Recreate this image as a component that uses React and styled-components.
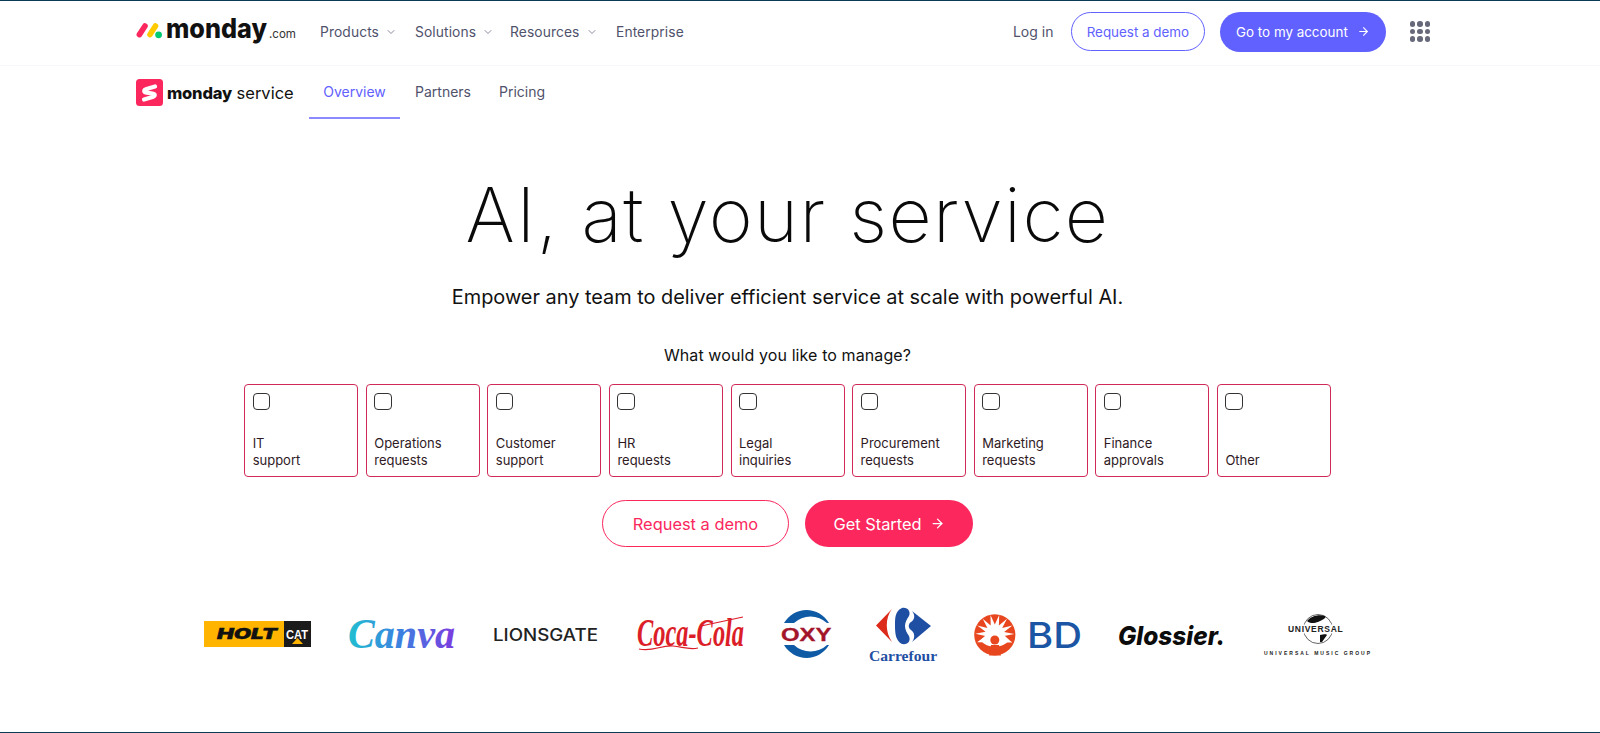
import React from 'react';
import styled, { createGlobalStyle } from 'styled-components';
import { ChevronDown, ArrowRight } from 'lucide-react';

const Global = createGlobalStyle`
  html, body { margin: 0; padding: 0; background: #fff; }
  body { font-family: Inter, "Open Sans", sans-serif; height: 733px; overflow: hidden; }
`;

const Page = styled.div`
  width: 1600px; height: 733px; box-sizing: border-box;
  border-top: 1px solid #0b3a55;
  border-bottom: 1px solid #0b3a55;
  overflow: hidden;
`;
const TopNav = styled.header`
  height: 64px; box-sizing: content-box; display: flex; align-items: center; padding: 0 0 0 136px;
  border-bottom: 1px solid #f5f5fc;
`;
const TopInner = styled.div`
  display: flex; align-items: center; flex: 1; margin-bottom: 3px;
`;
const Menu = styled.nav`
  display: flex; align-items: center; margin-left: 24px;
`;
const MenuItem = styled.a`
  display: flex; align-items: center; width: ${p => p.$w}px;
  font-size: 13.8px; color: #50526b; letter-spacing: .1px;
  svg { margin-left: 6px; color: #8a8c9e; }
`;
const RightNav = styled.div`
  display: flex; align-items: center; margin-left: auto; margin-right: 170px;
`;
const Login = styled.a`
  font-size: 14px; color: #50526b; margin-right: 20px; width: 38px; white-space: nowrap;
`;
const NavOutline = styled.a`
  width: 134px; height: 39px; box-sizing: border-box; border: 1px solid #6161ff; border-radius: 20px;
  display: flex; align-items: center; justify-content: center;
  color: #6161ff; font-size: 13.4px; margin-right: 15px;
`;
const NavFilled = styled.a`
  width: 166px; height: 40px; border-radius: 20px; background: #6161ff; color: #fff;
  display: flex; align-items: center; justify-content: center; gap: 9px; font-size: 13.4px;
`;
const Dots = styled.span`
  display: grid; grid-template-columns: repeat(3, 5.5px); gap: 1.8px; margin-left: 24px;
  i { width: 5.5px; height: 5.5px; border-radius: 50%; background: #676879; display: block; }
`;
const SubNav = styled.div`
  height: 53px; display: flex; align-items: stretch; padding-left: 136px;
`;
const ServiceLogo = styled.div`
  display: flex; align-items: center; gap: 4px; width: 173px;
`;
const ServiceText = styled.span`
  font-size: 16.5px; color: #111; white-space: nowrap;
  b { font-weight: 800; letter-spacing: -.2px; }
`;
const Tab = styled.a`
  box-sizing: border-box; width: ${p => p.$w}px; display: flex; align-items: center; justify-content: center;
  font-size: 14px; color: ${p => p.$active ? '#6161ff' : '#50526b'};
  border-bottom: 2px solid ${p => p.$active ? '#8b8bff' : 'transparent'};
`;
const Hero = styled.main`
  width: 1575px; display: flex; flex-direction: column; align-items: center;
`;
const Title = styled.h1`
  margin: 49px 0 0; font-size: 75px; line-height: 94px; font-weight: 250; color: #0a0a0a;
  letter-spacing: 1.45px; white-space: nowrap;
`;
const Subtitle = styled.p`
  margin: 20px 0 0; font-size: 19.9px; line-height: 30px; color: #111; font-weight: 400;
`;
const Question = styled.p`
  margin: 31px 0 0; font-size: 16px; line-height: 24px; color: #111; letter-spacing: .1px;
`;
const Cards = styled.div`
  display: flex; gap: 7.6px; margin-top: 17px;
`;
const Card = styled.label`
  box-sizing: border-box; width: 114px; height: 93px; border: 1px solid #cf2a58; border-radius: 4px;
  padding: 7.5px 7.5px 8px; display: flex; flex-direction: column; justify-content: space-between;
`;
const Check = styled.span`
  box-sizing: border-box; width: 17.5px; height: 17.5px; border: 1px solid #333; border-radius: 4px; display: block;
`;
const CardText = styled.span`
  font-size: 13px; line-height: 16.5px; color: #2f1a1f; white-space: pre-line;
`;
const Actions = styled.div`
  display: flex; gap: 16px; margin-top: 23px;
`;
const PinkOutline = styled.a`
  box-sizing: border-box; width: 187px; height: 47px; border: 1px solid #fb275d; border-radius: 24px;
  display: flex; align-items: center; justify-content: center; color: #fb275d; font-size: 16.4px;
`;
const PinkFilled = styled.a`
  width: 168px; height: 47px; border-radius: 24px; background: #fb275d; color: #fff;
  display: flex; align-items: center; justify-content: center; gap: 8px; font-size: 16.4px;
`;
const LogoRow = styled.div`
  display: flex; align-items: flex-start; margin-top: 61px; width: 1168px; height: 56px;
  justify-content: space-between;
`;
const LogoSvg = styled.svg`
  display: block; flex: none; overflow: visible; margin-top: ${p => p.$top || 0}px;
`;

const MondayLogo = () => (
  <LogoSvg width="160" height="32" viewBox="0 0 160 32">
    <line x1="3.4" y1="18.6" x2="9" y2="10" stroke="#fb275d" strokeWidth="5.6" strokeLinecap="round" />
    <line x1="14" y1="18.6" x2="19.5" y2="10" stroke="#ffcb00" strokeWidth="5.6" strokeLinecap="round" />
    <circle cx="22.6" cy="18.8" r="3.4" fill="#00ca72" />
    <text x="30" y="21.5" fontFamily="Inter" fontWeight="800" fontSize="26.5" textLength="101" lengthAdjust="spacingAndGlyphs" fill="#111">monday</text>
    <text x="133" y="21.5" fontFamily="Inter" fontWeight="400" fontSize="12.5" textLength="27" lengthAdjust="spacingAndGlyphs" fill="#333">.com</text>
  </LogoSvg>
);
const ServiceIcon = () => (
  <LogoSvg width="27" height="27" viewBox="0 0 27 27">
    <rect width="27" height="27" rx="3.5" fill="#fb275d" />
    <path d="M19 7.5 10.5 10C7.5 11 7.5 13 10.5 13.6L16.5 14.5C19.5 15 19.5 17 16.5 18L8 20.5" fill="none" stroke="#fff" strokeWidth="4.2" strokeLinecap="round" strokeLinejoin="round" />
  </LogoSvg>
);
const Holt = () => (
  <LogoSvg width="107" height="27" viewBox="0 0 107 27" $top={13}>
    <rect width="80" height="26" fill="#ffb500" />
    <rect x="80" width="27" height="26" fill="#1b1b1b" />
    <text x="13" y="18" fontFamily="Inter" fontWeight="900" fontStyle="italic" fontSize="14.5" textLength="60" lengthAdjust="spacingAndGlyphs" fill="#111" stroke="#111" strokeWidth=".4">HOLT</text>
    <path d="M88 23 93.5 17 99 23z" fill="#ffb500" />
    <text x="82" y="18" fontFamily="Liberation Sans" fontWeight="700" fontSize="13" textLength="22" lengthAdjust="spacingAndGlyphs" fill="#fff">CAT</text>
  </LogoSvg>
);
const Canva = () => (
  <LogoSvg width="108" height="36" viewBox="0 0 108 36" $top={9}>
    <defs>
      <linearGradient id="canvaGrad" gradientUnits="userSpaceOnUse" x1="0" x2="107" y1="0" y2="0">
        <stop offset="0" stopColor="#20bfd0" />
        <stop offset=".5" stopColor="#3d7fe0" />
        <stop offset="1" stopColor="#7d3be0" />
      </linearGradient>
    </defs>
    <text x="0" y="31" fontFamily="Liberation Serif" fontStyle="italic" fontWeight="700" fontSize="43" textLength="107" lengthAdjust="spacingAndGlyphs" fill="url(#canvaGrad)">Canva</text>
  </LogoSvg>
);
const Lionsgate = () => (
  <LogoSvg width="106" height="16" viewBox="0 0 106 16" $top={19}>
    <text x="0" y="14" fontFamily="Inter" fontWeight="500" fontSize="17" textLength="105" lengthAdjust="spacingAndGlyphs" fill="#222">LIONSGATE</text>
  </LogoSvg>
);
const Coke = () => (
  <LogoSvg width="107" height="36" viewBox="0 0 107 36" $top={9}>
    <text transform="translate(0 29) scale(.61 1)" fontFamily="Liberation Serif" fontStyle="italic" fontWeight="700" fontSize="40" fill="#dc1e28">Coca-Cola</text>
    <path d="M2 32c14 3 22-4 34-3 10 1 16 4 25 2M64 9c14-3 28-6 42-9" fill="none" stroke="#dc1e28" strokeWidth="1.2" />
  </LogoSvg>
);
const Oxy = () => (
  <LogoSvg width="51" height="52" viewBox="0 0 51 52">
    <path d="M3 15A26 26 0 0 1 48 15L46 15A24 24 0 0 0 13 15Z" fill="#0f5aa5" />
    <path d="M3 37A26 26 0 0 0 48 37L46 37A24 24 0 0 1 13 37Z" fill="#0f5aa5" />
    <text transform="translate(0 33) scale(1.33 1)" fontFamily="Liberation Sans" fontWeight="700" fontSize="18" fill="#a3152a" stroke="#a3152a" strokeWidth=".3">OXY</text>
  </LogoSvg>
);
const Carrefour = () => (
  <LogoSvg width="67" height="54" viewBox="0 0 67 54">
    <path d="M23 1 7 17.5 23 34C16 24 16 10 23 1Z" fill="#dc2a1b" />
    <path d="M33 0C26 3 26 10 26 18 26 26 27 33 33 36 39 37 42 33 40 28 38 25 36 22 36 18 36 14 38 11 40 8 42 4 39-1 33 0Z" fill="#1f4fa3" />
    <path d="M43 3 62 18 43 34C47 29 45 24 42 22 39 20 39 16 42 14 45 12 47 8 43 3Z" fill="#1f4fa3" />
    <text x="0" y="53" fontFamily="Liberation Serif" fontWeight="700" fontSize="15.6" fill="#1f4fa3">Carrefour</text>
  </LogoSvg>
);
const starPoints = Array.from({ length: 19 }, (_, i) => {
  const a = (-205 + i * 12.8) * Math.PI / 180;
  const r = i % 2 === 0 ? 19.5 : 9.5;
  return `${(20.8 + r * Math.cos(a)).toFixed(1)},${(20 + r * Math.sin(a)).toFixed(1)}`;
}).join(' ');
const BD = () => (
  <LogoSvg width="107" height="42" viewBox="0 0 107 42" $top={6}>
    <circle cx="20.8" cy="20.8" r="20.6" fill="#e8461e" />
    <polygon points={starPoints} fill="#fff" />
    <path d="M7 26C11 35 30 35 35 26L29 20H13Z" fill="#fff" />
    <circle cx="20.8" cy="26" r="4.5" fill="#e8461e" />
    <path d="M15 41.5 17 31H25L27 41.5Z" fill="#e8461e" />
    <text x="53" y="33.5" fontFamily="Inter" fontWeight="500" fontSize="35" textLength="55" lengthAdjust="spacingAndGlyphs" fill="#1b55a4">BD</text>
  </LogoSvg>
);
const Glossier = () => (
  <LogoSvg width="108" height="26" viewBox="0 0 108 26" $top={15}>
    <text x="0" y="22" fontFamily="Inter" fontWeight="800" fontStyle="italic" fontSize="26" textLength="107" lengthAdjust="spacingAndGlyphs" fill="#0c0c0c">Glossier.</text>
  </LogoSvg>
);
const Universal = () => (
  <LogoSvg width="108" height="44" viewBox="0 0 108 44" $top={6}>
    <circle cx="54" cy="15" r="14.5" fill="#fff" stroke="#222" strokeWidth=".7" />
    <path d="M43 7c4-5 12-7 18-5 2 2-3 4-7 6-3 1-8 2-11-1zM56 21c4-1 7-1 7 0l-5 7h-2z" fill="#111" />
    <rect x="22" y="10.5" width="64" height="9" fill="#fff" />
    <text x="24" y="18" fontFamily="Liberation Sans" fontWeight="700" fontSize="8.5" letterSpacing=".7" fill="#222">UNIVERSAL</text>
    <text x="0" y="41" fontFamily="Liberation Sans" fontWeight="700" fontSize="5" letterSpacing="2" fill="#222">UNIVERSAL MUSIC GROUP</text>
  </LogoSvg>
);

const cards = ['IT\nsupport', 'Operations\nrequests', 'Customer\nsupport', 'HR\nrequests', 'Legal\ninquiries', 'Procurement\nrequests', 'Marketing\nrequests', 'Finance\napprovals', 'Other'];

export default function App() {
  return (
    <Page>
      <Global />
      <TopNav>
        <TopInner>
          <MondayLogo />
          <Menu>
            <MenuItem $w={95}>Products<ChevronDown size={12} /></MenuItem>
            <MenuItem $w={95}>Solutions<ChevronDown size={12} /></MenuItem>
            <MenuItem $w={106}>Resources<ChevronDown size={12} /></MenuItem>
            <MenuItem $w={70}>Enterprise</MenuItem>
          </Menu>
          <RightNav>
            <Login>Log in</Login>
            <NavOutline>Request a demo</NavOutline>
            <NavFilled>Go to my account<ArrowRight size={13} /></NavFilled>
            <Dots>{Array.from({ length: 9 }, (_, i) => <i key={i} />)}</Dots>
          </RightNav>
        </TopInner>
      </TopNav>
      <SubNav>
        <ServiceLogo>
          <ServiceIcon />
          <ServiceText><b>monday</b> service</ServiceText>
        </ServiceLogo>
        <Tab $active $w={91}>Overview</Tab>
        <Tab $w={86}>Partners</Tab>
        <Tab $w={72}>Pricing</Tab>
      </SubNav>
      <Hero>
        <Title>AI, at your service</Title>
        <Subtitle>Empower any team to deliver efficient service at scale with powerful AI.</Subtitle>
        <Question>What would you like to manage?</Question>
        <Cards>
          {cards.map(c => (
            <Card key={c}>
              <Check />
              <CardText>{c}</CardText>
            </Card>
          ))}
        </Cards>
        <Actions>
          <PinkOutline>Request a demo</PinkOutline>
          <PinkFilled>Get Started<ArrowRight size={15} /></PinkFilled>
        </Actions>
        <LogoRow>
          <Holt />
          <Canva />
          <Lionsgate />
          <Coke />
          <Oxy />
          <Carrefour />
          <BD />
          <Glossier />
          <Universal />
        </LogoRow>
      </Hero>
    </Page>
  );
}
